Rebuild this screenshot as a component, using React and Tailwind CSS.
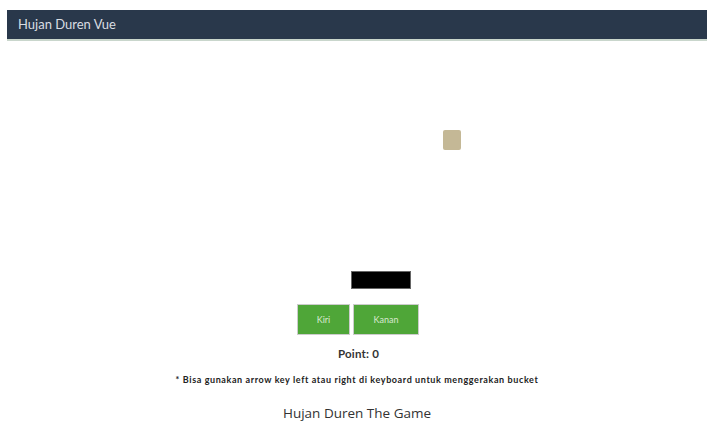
export default function App() {
  return (
    <div className="w-[717px] h-[436px] bg-white" style={{ fontFamily: "Lato, 'Noto Sans', sans-serif" }}>
      <div className="pt-[10px] px-[7px] w-[714px]">
        <div className="h-[31px] bg-[#29384b] border-b-2 border-[#c9d6cc] flex items-center px-[11px]">
          <span className="text-[#d9dde2] text-[13px]">Hujan Duren Vue</span>
        </div>
        <div className="relative h-[250px]">
          <div className="absolute left-[436px] top-[89px] w-[18px] h-[20px] bg-[#c4b896] rounded-[2px]" />
          <div className="absolute left-[344px] top-[230px] w-[60px] h-[18px] bg-black border border-[#666]" />
        </div>
        <div className="flex justify-center gap-[3px] mt-[13px] pl-[2px]">
          <button className="w-[53px] h-[31px] bg-[#4fa638] border border-[#ccc] text-[#d8e8d0] text-[9px]">Kiri</button>
          <button className="w-[66px] h-[31px] bg-[#4fa638] border border-[#ccc] text-[#d8e8d0] text-[9px]">Kanan</button>
        </div>
        <div className="text-center text-[11.5px] font-bold text-[#333] mt-[12px] pl-[3px] leading-[14px] tracking-[0.2px]">Point: 0</div>
        <div className="text-center text-[9px] font-bold text-[#222] mt-[13px] leading-[12px] tracking-[0.6px]">* Bisa gunakan arrow key left atau right di keyboard untuk menggerakan bucket</div>
        <div className="text-center text-[13.5px] text-[#333] mt-[18px] leading-[18px]" style={{ fontFamily: "'Open Sans', 'Noto Sans', sans-serif" }}>Hujan Duren The Game</div>
      </div>
    </div>
  );
}
